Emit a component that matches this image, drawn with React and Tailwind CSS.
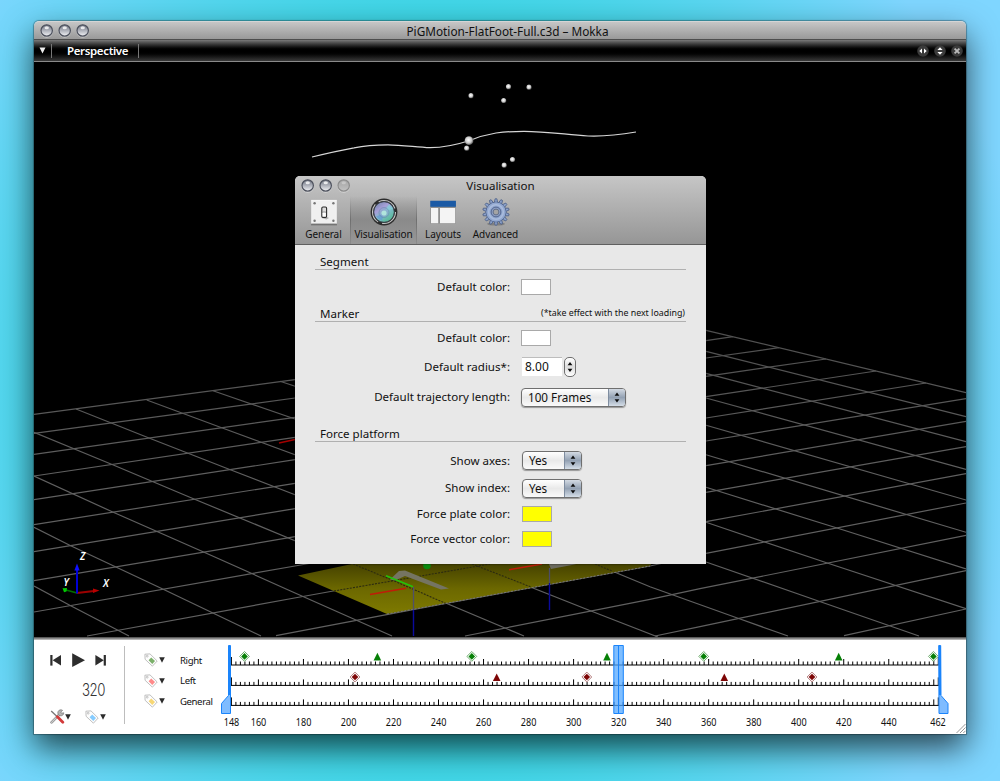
import React from "react";

const FONT = "font-['Noto_Sans','Open_Sans',sans-serif]";

/* ---------- window buttons ---------- */
function Bead({ dim, id }) {
  return (
    <svg className="h-[14px] w-[14px] shrink-0" viewBox="0 0 14 14">
      <defs>
        <linearGradient id={id} x1="0" y1="0" x2="0" y2="1">
          <stop offset="0" stopColor={dim ? "#a9a9a9" : "#6d7280"} />
          <stop offset="0.5" stopColor={dim ? "#b2b2b2" : "#aeb1ba"} />
          <stop offset="1" stopColor={dim ? "#c4c4c4" : "#f4f5f8"} />
        </linearGradient>
      </defs>
      <circle cx="6.7" cy="7.6" r="6.2" fill="#fff" opacity="0.4" />
      <circle cx="6.7" cy="6.5" r="5.7" fill={`url(#${id})`} stroke={dim ? "#8b8b8b" : "#4c505c"} strokeWidth="1.2" />
      <ellipse cx="6.7" cy="3.8" rx="2.2" ry="1.5" fill="#fff" opacity={dim ? 0.3 : 0.8} />
    </svg>
  );
}

/* ---------- 3D scene ---------- */
const GRID = [
  [34, 414.3, 295, 379.7, 692, 327],
  [34, 433.3, 295, 398, 706, 340.7, 733, 336.7],
  [34, 454.3, 295, 417.3, 706, 358, 779, 347.7],
  [34, 476, 295, 437.3, 706, 376.3, 826, 359],
  [34, 499.7, 295, 459.7, 706, 396.7, 876, 371],
  [34, 524.7, 295, 483.3, 706, 418, 926, 383],
  [34, 551.7, 295, 508.7, 706, 441, 966, 398.7],
  [34, 580.7, 295, 536.7, 706, 465.7, 966, 421.3],
  [34, 612, 295, 566, 706, 492.3, 966, 446.7],
  [87, 636, 300, 597, 350, 588, 490, 564, 706, 521.7, 966, 473.7],
  [276, 635.7, 446, 603.3, 650, 566, 706, 553.3, 966, 503],
  [465, 636, 650, 599.3, 700, 588.7, 966, 535.3],
  [655, 636, 700, 626.7, 966, 570.7],
  [844, 635.7, 966, 609],
  [34, 586, 70.7, 605.7, 129, 636],
  [34, 527.3, 70.7, 545.7, 162.7, 589, 261, 636],
  [34, 476, 112.7, 512, 203, 551.7, 290, 590.7, 392, 636],
  [34, 432.3, 112.7, 464.7, 194, 499, 295, 540.7, 353, 564, 524, 636],
  [76, 409, 149, 438, 231, 470, 295, 494.7, 472, 564, 591, 611, 658, 637],
  [146.7, 400, 221.7, 427.7, 295, 454.7, 595, 564, 650, 586.7, 738, 618.3, 788, 636],
  [213, 390.7, 290, 417.3, 706, 562, 819, 601.3, 919, 636],
  [280, 381.3, 706, 522.3, 828, 563.3, 966, 608.7],
  [350, 373, 706, 487.3, 837, 528, 966, 569],
  [420, 364, 706, 454.7, 966, 532.3],
  [480, 356, 706, 425.3, 966, 500],
  [540, 348, 706, 398, 966, 469.3],
  [590, 341, 706, 373.3, 966, 441.7],
  [640, 334, 706, 351.3, 966, 416.7],
  [692, 327, 706, 330.3, 966, 392.7],
];

const MARKERS = [
  [471, 95.7], [508.5, 86.7], [529, 87.2], [503.7, 100.5], [466.7, 148.2], [504.2, 165.2], [512.5, 159.5],
];

function toPoints(a) {
  const out = [];
  for (let i = 0; i < a.length; i += 2) out.push(`${a[i]},${a[i + 1]}`);
  return out.join(" ");
}

function Scene() {
  return (
    <svg className="block h-[575px] w-[932px] bg-black" viewBox="34 62 932 575">
      <defs>
        <radialGradient id="ball" cx="0.45" cy="0.42" r="0.58">
          <stop offset="0" stopColor="#fff" />
          <stop offset="0.6" stopColor="#c9c9c9" />
          <stop offset="1" stopColor="#4a4a4a" />
        </radialGradient>
        <linearGradient id="plate" x1="0" y1="564" x2="0" y2="614" gradientUnits="userSpaceOnUse">
          <stop offset="0" stopColor="#454200" />
          <stop offset="0.5" stopColor="#6c6800" />
          <stop offset="1" stopColor="#7e7a00" />
        </linearGradient>
        <linearGradient id="fade" x1="0" y1="330" x2="0" y2="480" gradientUnits="userSpaceOnUse">
          <stop offset="0" stopColor="#4f4f4f" />
          <stop offset="1" stopColor="#606060" />
        </linearGradient>
      </defs>
      <g fill="none" stroke="url(#fade)" strokeWidth="1.2">
        {GRID.map((g, i) => (
          <polyline key={i} points={toPoints(g)} />
        ))}
      </g>
      <polygon points="298,575.6 352,564 340,550 660,550 650,566 387,614" fill="url(#plate)" />
      <g fill="none" stroke="#2c2b10" strokeWidth="1.1" strokeDasharray="2 1.2">
        <path d="M334 591 L490 564 M353 564 L392 580 L446 603.5 M472 564 L531 587 M595 564 L612 571" />
      </g>
      <path d="M387 614 L446 603.3 L650 566" fill="none" stroke="#777" strokeWidth="1" strokeDasharray="2 1.5" />
      <path d="M390 579.5 L399 571 L405 570.5 L449 588.5 L441 589.5 L405 576 L395 580.5 Z" fill="#757462" />
      <path d="M548 562 H585 L572 565 L551 569 Z" fill="#6b6a5e" />
      <path d="M370 594.5 L406 588.2 M509 569.8 L542 564" stroke="#c01c08" strokeWidth="1.5" />
      <path d="M386 575.7 L413 586.8" stroke="#22c40a" strokeWidth="1.6" />
      <path d="M413.5 587 V610" stroke="#50506a" strokeWidth="1.3" />
      <path d="M413.5 610 V636 M549.5 583 V610" stroke="#0a0a9c" strokeWidth="1.4" />
      <path d="M549.5 568 V583" stroke="#4c4c68" strokeWidth="1.3" />
      <circle cx="427" cy="565.5" r="3.8" fill="#0a8a0e" />
      <path d="M279 443 L295 439.5" stroke="#a30000" strokeWidth="1.5" />

      <path
        d="M312 157 C330 152.5 342 150 354 147.8 C364 145.7 375 144.8 388 144.8 C402 145 416 147 430 147.7 C444 147.6 457 144.7 469 140.8 C478 137 486 134.6 496 133 C506 131.7 514 131.3 524 131.3 C545 131.4 565 134.4 588 136 C604 136.6 620 134.8 636 132"
        fill="none" stroke="#d6d6d6" strokeWidth="1.2"
      />
      {MARKERS.map(([x, y], i) => (
        <circle key={i} cx={x} cy={y} r="2.6" fill="url(#ball)" />
      ))}
      <circle cx="469" cy="140.7" r="4.4" fill="url(#ball)" />

      <path d="M77 593 L94 591" stroke="#9c0000" strokeWidth="1.8" />
      <path d="M93 588.6 L99.5 590.6 L93 593 Z" fill="#b80000" />
      <path d="M77 593 L66 590" stroke="#007000" strokeWidth="1.8" />
      <path d="M62.5 588.3 L67 588 L66.5 591.5 L64 592.3 Z" fill="#00c800" />
      <path d="M77 593.5 V568" stroke="#0000d4" strokeWidth="2" />
      <path d="M74.4 570.5 L77 563.5 L79.6 570.5 Z" fill="#1010ff" />
      <g fill="#fff" fontFamily="Noto Sans, sans-serif" fontSize="10" fontWeight="600" fontStyle="italic">
        <text x="80" y="560">Z</text>
        <text x="63.5" y="586">Y</text>
        <text x="103" y="587">X</text>
      </g>
    </svg>
  );
}

/* ---------- toolbar icons ---------- */
function SwitchIcon() {
  return (
    <svg className="h-7 w-7" viewBox="0 0 28 28">
      <rect x="1" y="3.5" width="26" height="24" fill="#000" opacity="0.22" />
      <rect x="1.7" y="2.3" width="24.6" height="23.3" fill="#f0f0f0" stroke="#fff" strokeWidth="0.8" />
      <rect x="1.3" y="25.6" width="25.4" height="1" fill="#6c6c6c" />
      {[[4.6, 5.2], [23.4, 5.2], [4.6, 22.8], [23.4, 22.8]].map(([x, y], i) => (
        <circle key={i} cx={x} cy={y} r="1.2" fill="#777" />
      ))}
      <path d="M14 17 L19 20 L16.5 21.5 L11.5 20 Z" fill="#b5b5b5" />
      <rect x="11.8" y="9" width="4.8" height="10.4" rx="1.2" fill="#dcdcdc" stroke="#2a2a2a" strokeWidth="1.1" />
      <path d="M12.6 14.2 H15.8" stroke="#555" strokeWidth="0.8" />
      <rect x="12.7" y="14.6" width="3" height="4" rx="0.6" fill="#fff" />
    </svg>
  );
}

function LensIcon() {
  return (
    <svg className="h-7 w-7" viewBox="0 0 28 28">
      <defs>
        <linearGradient id="lens" x1="0.1" y1="0" x2="0.8" y2="1">
          <stop offset="0" stopColor="#6f83a8" />
          <stop offset="0.35" stopColor="#a79fd8" />
          <stop offset="0.6" stopColor="#7cbcc8" />
          <stop offset="1" stopColor="#4fb98a" />
        </linearGradient>
      </defs>
      <circle cx="14" cy="14" r="13.4" fill="#2c2c2c" />
      <circle cx="14" cy="14" r="11.5" fill="none" stroke="#c6c6c6" strokeWidth="1.1" strokeDasharray="20 4.1" />
      <circle cx="14" cy="14" r="10.3" fill="url(#lens)" stroke="#39414c" strokeWidth="0.9" />
      <path d="M6.4 18.5 A9 9 0 0 0 12 22.6 L14 15 Z" fill="#5f93d8" opacity="0.6" />
      <path d="M14 13.5 L19 6.4 A9 9 0 0 1 22.6 11 Z" fill="#86dfe0" opacity="0.5" />
      <circle cx="14" cy="14.5" r="5" fill="#8fa8cf" opacity="0.55" stroke="#5e7fa4" strokeWidth="0.8" />
      <circle cx="14" cy="15" r="2.6" fill="#baf3e0" opacity="0.8" />
    </svg>
  );
}

function LayoutIcon() {
  return (
    <svg className="h-7 w-7" viewBox="0 0 28 28">
      <rect x="1.3" y="2.8" width="25.6" height="22.8" fill="#8f8f8f" />
      <rect x="1.3" y="2.8" width="25.6" height="6" fill="#1b5aa5" />
      <rect x="2" y="10" width="7.2" height="15.2" fill="#f4f4f4" />
      <rect x="11" y="10" width="15.2" height="15.2" fill="#f4f4f4" />
    </svg>
  );
}

function GearIcon() {
  const teeth = Array.from({ length: 14 }, (_, i) => (i * 360) / 14);
  return (
    <svg className="h-7 w-7" viewBox="0 0 28 28">
      <ellipse cx="14" cy="26" rx="9" ry="1.6" fill="#555" opacity="0.45" />
      <g fill="#8ca2cb" stroke="#4c5f86" strokeWidth="0.8">
        {teeth.map((a) => (
          <path key={a} d="M12.2 5 L13.1 0.8 H14.9 L15.8 5 Z" transform={`rotate(${a} 14 14)`} />
        ))}
        <circle cx="14" cy="14" r="10" />
      </g>
      <circle cx="14" cy="14" r="9.6" fill="#92a8d0" />
      <circle cx="14" cy="14" r="7.3" fill="none" stroke="#a9bbdc" strokeWidth="1.6" />
      <circle cx="14" cy="14" r="4.9" fill="#8d9fc4" stroke="#52658e" strokeWidth="1" />
      <circle cx="14" cy="14" r="2.9" fill="#a4a4a4" stroke="#5c6a86" strokeWidth="0.9" />
    </svg>
  );
}

/* ---------- preference widgets ---------- */
function Arrows({ className }) {
  return (
    <svg className={className} viewBox="0 0 6 11">
      <path d="M3 0.4 L5.4 3.8 H0.6 Z M3 10.6 L5.4 7.2 H0.6 Z" fill="#0c0c0c" />
    </svg>
  );
}

function Combo({ children, className }) {
  return (
    <div className={`flex h-[19px] overflow-hidden rounded-[4px] border border-[#6f6f6f] bg-linear-to-b from-white via-[#e9e9e9] to-[#fafafa] shadow-[0_1px_1px_rgba(0,0,0,0.35)] ${className}`}>
      <span className="flex-1 pl-[6px] text-[11.7px] leading-[17px]">{children}</span>
      <span className="flex w-[17px] items-center justify-center border-l border-[#7f8da0] bg-linear-to-b from-[#d3dae3] via-[#93a1b3] to-[#d5dee8]">
        <Arrows className="h-[11px] w-[6px]" />
      </span>
    </div>
  );
}

function Swatch({ className }) {
  return <div className={`h-4 w-[30px] border border-[#a9a9a9] ${className}`} />;
}

function Row({ label, className, children }) {
  return (
    <div className={`flex items-center ${className}`}>
      <span className="w-[195px] shrink-0 text-right whitespace-nowrap">{label}</span>
      <div className="ml-[11px] flex items-center">{children}</div>
    </div>
  );
}

function Section({ title, note, className }) {
  return (
    <div className={`flex items-end justify-between border-b border-[#b0b0b0] pl-[5px] ${className}`}>
      <span className="leading-[15px]">{title}</span>
      {note && <span className="pr-px text-[8.85px] leading-[15px]">{note}</span>}
    </div>
  );
}

function Tool({ icon, label, className }) {
  return (
    <div className={`flex flex-col items-center pt-[2px] ${className}`}>
      {icon}
      <span className="mt-[2px] text-[10px] leading-[13px] tracking-[-0.08px] whitespace-nowrap">{label}</span>
    </div>
  );
}

function Preferences() {
  return (
    <div className="absolute top-[155px] left-[261px] h-[388px] w-[411px] overflow-hidden rounded-t-[5px] bg-[#e8e8e8] text-[11.55px] text-[#111] shadow-[0_0_2px_rgba(0,0,0,0.8)]">
      <div className="h-[69px] border-b border-[#5f5f5f] bg-linear-to-b from-[#c6c6c6] to-[#969696]">
        <div className="grid h-[20px] grid-cols-[1fr_auto_1fr] items-center">
          <div className="flex gap-1 pl-[6px]">
            <Bead id="p1" />
            <Bead id="p2" />
            <Bead id="p3" dim />
          </div>
          <span className="leading-[20px]">Visualisation</span>
        </div>
        <div className="flex h-[48px]">
          <Tool className="w-[55px] pl-[2px]" icon={<SwitchIcon />} label="General" />
          <div className="w-px bg-linear-to-b from-transparent via-[#6f6f6f] to-[#8c8c8c]" />
          <Tool
            className="w-[65px] bg-linear-to-b from-transparent via-[#8a8a8a] to-[#979797]"
            icon={<LensIcon />}
            label="Visualisation"
          />
          <div className="w-px bg-linear-to-b from-transparent via-[#6f6f6f] to-[#8c8c8c]" />
          <Tool className="w-[52px]" icon={<LayoutIcon />} label="Layouts" />
          <Tool className="w-[53px]" icon={<GearIcon />} label="Advanced" />
        </div>
      </div>
      <div className="px-5">
        <Section title="Segment" className="h-[25px]" />
        <Row label="Default color:" className="h-[34px]"><Swatch className="bg-white" /></Row>
        <Section title="Marker" note="(*take effect with the next loading)" className="h-[18px]" />
        <Row label="Default color:" className="h-[32px]"><Swatch className="bg-white" /></Row>
        <Row label="Default radius*:" className="h-[25px]">
          <div className="ml-px h-[19px] w-[40px] border-t border-[#bdbdbd] bg-white pl-[3px] text-[12px] leading-[18px]">8.00</div>
          <div className="ml-[2px] flex h-[20px] w-[12px] items-center justify-center rounded-[5px] border border-[#6f6f6f] bg-linear-to-b from-white via-[#ddd] to-white">
            <Arrows className="h-[12px] w-[6px]" />
          </div>
        </Row>
        <Row label="Default trajectory length:" className="h-[36px]"><Combo className="w-[105px]">100 Frames</Combo></Row>
        <Section title="Force platform" className="h-[27px]" />
        <div className="pt-[5px]">
          <Row label="Show axes:" className="h-[27px]"><Combo className="ml-px w-[60px]">Yes</Combo></Row>
          <Row label="Show index:" className="h-[28px]"><Combo className="ml-px w-[60px]">Yes</Combo></Row>
          <Row label="Force plate color:" className="h-[24px]"><Swatch className="ml-px bg-[#ffff00]" /></Row>
          <Row label="Force vector color:" className="h-[26px]"><Swatch className="ml-px bg-[#ffff00]" /></Row>
        </div>
      </div>
    </div>
  );
}

/* ---------- transport and timeline ---------- */
function Caret() {
  return (
    <svg className="h-[6px] w-[6px]" viewBox="0 0 6 6">
      <path d="M0.2 0.3 H5.8 L3 5.8 Z" fill="#2b2b2b" />
    </svg>
  );
}

function Tag({ fill }) {
  return (
    <svg className="h-[14px] w-[14px]" viewBox="0 0 14 14">
      <path d="M0.9 1.2 L6 0.9 L13.2 8 L8.4 13.2 L1.1 6.3 Z" fill="#fdfdfd" stroke="#b9b9b9" strokeWidth="0.9" strokeLinejoin="round" />
      <circle cx="3.2" cy="3.2" r="0.9" fill="#fff" stroke="#aaa" strokeWidth="0.7" />
      <path d="M7.2 4.4 L11 8.1 L8.3 10.9 L4.6 7.2 Z" fill={fill} />
    </svg>
  );
}

function ToolsIcon() {
  return (
    <svg className="h-[15px] w-[15px]" viewBox="0 0 15 15">
      <path d="M1.6 13.4 L9.5 5.4" stroke="#8d8d8d" strokeWidth="2.6" strokeLinecap="round" />
      <path d="M1.6 13.4 L9.5 5.4" stroke="#cfcfcf" strokeWidth="1.2" strokeLinecap="round" />
      <path d="M12.6 1.4 A3 3 0 1 0 13.8 3.8 L11.4 4.2 L10.8 3 Z" fill="#b5b5b5" stroke="#777" strokeWidth="0.7" />
      <path d="M1.2 2 L7 7.4" stroke="#777" strokeWidth="1.3" />
      <path d="M7.4 7.8 L12.8 13.2" stroke="#d23a3a" strokeWidth="2.8" strokeLinecap="round" />
    </svg>
  );
}

const frameX = (f) => 231.4 + (f - 148) * 2.2512;
const TICKS = Array.from({ length: 158 }, (_, i) => 148 + i * 2);
const LABELS = [148, 160, 180, 200, 220, 240, 260, 280, 300, 320, 340, 360, 380, 400, 420, 440, 462];

function tickHeight(f) {
  if (f === 148 || f === 462) return 8;
  return f % 20 === 0 ? 6 : 3.5;
}

function Diamond({ x, y, color, light }) {
  return (
    <g>
      <path d={`M${x} ${y - 4.9} L${x + 4.9} ${y} L${x} ${y + 4.9} L${x - 4.9} ${y} Z`} fill="#fff" stroke={light} strokeWidth="1" />
      <path d={`M${x} ${y - 3.3} L${x + 3.3} ${y} L${x} ${y + 3.3} L${x - 3.3} ${y} Z`} fill={color} />
    </g>
  );
}

function Triangle({ x, y, color }) {
  return <path d={`M${x} ${y - 4} L${x + 3.8} ${y + 3.6} H${x - 3.8} Z`} fill={color} />;
}

function Timeline() {
  return (
    <svg className="block h-[94px] w-[746px]" viewBox="220 640 746 94">
      {[665, 685.4, 705.4].map((y) => (
        <g key={y} stroke="#000" strokeWidth="1">
          <path d={`M231 ${y} H939`} />
          {TICKS.map((f) => (
            <path key={f} d={`M${frameX(f)} ${y} V${y - tickHeight(f)}`} />
          ))}
        </g>
      ))}
      {[244.5, 471.8, 703.7, 933.4].map((x) => (
        <Diamond key={x} x={x} y={656.4} color="#068006" light="#6fae6f" />
      ))}
      {[377.4, 607, 838.7].map((x) => (
        <Triangle key={x} x={x} y={656.8} color="#068006" />
      ))}
      {[355, 586.8, 812].map((x) => (
        <Diamond key={x} x={x} y={677} color="#7d0505" light="#b47c7c" />
      ))}
      {[496.7, 724.3].map((x) => (
        <Triangle key={x} x={x} y={677.4} color="#7d0505" />
      ))}
      <g stroke="#1a84fb" strokeWidth="1">
        <path d="M228.5 645.5 H230.5 V713.5 H221.5 V703.5 L228.5 695.5 Z" fill="#7fbcff" />
        <path d="M229.5 646 V695" strokeWidth="2" />
        <path d="M938.7 645.5 H940.7 L941 695.5 L948 703.5 V713.5 H939 Z" fill="#7fbcff" />
        <path d="M940 646 V695" strokeWidth="2" />
        <path d="M613.8 645.5 H623.3 V713.5 H613.8 Z" fill="#4ea5ff" fillOpacity="0.72" />
        <path d="M618.5 646 V713" />
      </g>
      <g fontFamily="Noto Sans, Open Sans, sans-serif" fontSize="10" fill="#111" textAnchor="middle">
        {LABELS.map((f) => (
          <text key={f} x={f === 462 ? 938 : frameX(f) + 0.1} y="725.9" textLength="15.6" lengthAdjust="spacingAndGlyphs">{f}</text>
        ))}
      </g>
      <path d="M956.5 733 L965.5 724 M960 733 L965.5 727.5 M963.3 733 L965.5 730.8" stroke="#8c8c8c" strokeWidth="0.9" />
    </svg>
  );
}

function Transport() {
  return (
    <div className="flex h-[78px] w-[91px] flex-col border-r border-[#bdbdbd] pl-4">
      <svg className="mt-[6px] h-[16px] w-[58px]" viewBox="0 0 58 16">
        <g fill="#2d2d2d">
          <rect x="0.3" y="3" width="2.2" height="10.6" />
          <path d="M11 3 V13.6 L2.6 8.3 Z" />
          <path d="M22.2 1.2 V15 L35 8.2 Z" />
          <rect x="53.7" y="3" width="2.2" height="10.6" />
          <path d="M45.4 3 V13.6 L53.8 8.3 Z" />
        </g>
      </svg>
      <span className="mt-[12px] ml-[32px] h-[20px] w-[23px] origin-left scale-x-[0.78] font-['Inter',sans-serif] text-[17px] leading-[20px] font-light tracking-[-0.6px] text-[#333]">320</span>
      <div className="mt-[9px] flex items-center">
        <ToolsIcon />
        <Caret />
        <div className="ml-[14px] flex items-center gap-px">
          <Tag fill="#86ccff" />
          <Caret />
        </div>
      </div>
    </div>
  );
}

function Tracks() {
  return (
    <div className="flex flex-col pt-[10px] pl-[19px] text-[9.6px] tracking-[-0.4px] text-[#111]">
      {[["Right", "#7bb06a"], ["Left", "#ff8a8a"], ["General", "#f7d774"]].map(([name, fill]) => (
        <div key={name} className="flex h-[20.4px] items-center">
          <Tag fill={fill} />
          <span className="ml-px flex w-[21px]"><Caret /></span>
          <span className="pt-[2px]">{name}</span>
        </div>
      ))}
    </div>
  );
}

function ViewButton({ children }) {
  return (
    <svg className="h-3 w-3" viewBox="0 0 12 12">
      <circle cx="6" cy="6" r="5.8" fill="#3b3b3b" />
      {children}
    </svg>
  );
}

export default function App() {
  return (
    <div className={`h-[781px] w-[1000px] overflow-hidden bg-[radial-gradient(ellipse_600px_620px_at_44%_50%,#2fd6de_0%,#35d6e2_55%,#7fd6ff_100%)] px-[34px] pt-[21px] ${FONT}`}>
      <div className="relative h-[713px] w-[932px] rounded-t-[5px] shadow-[0_14px_32px_rgba(0,0,0,0.68),0_0_1px_1px_rgba(0,0,0,0.3)]">
        <div className="grid h-[19px] grid-cols-[1fr_auto_1fr] items-center rounded-t-[5px] border-t border-b border-t-[#d5d5d5] border-b-[#4d4d4d] bg-linear-to-b from-[#c6c6c6] to-[#999]">
          <div className="flex gap-1 pl-[6px]">
            <Bead id="w1" />
            <Bead id="w2" />
            <Bead id="w3" />
          </div>
          <span className="pl-[15px] text-[11.8px] leading-[18px] text-[#111]">PiGMotion-FlatFoot-Full.c3d – Mokka</span>
        </div>
        <div className="flex h-[22px] items-center border-b border-[#8a8a8a] bg-linear-to-b from-[#7a7a7a] via-black via-50% to-[#3a3a3a] text-white">
          <div className="flex h-[14px] w-[18px] items-center border-r border-[#777] pl-[5px]">
            <svg className="h-[7px] w-[7px]" viewBox="0 0 7 7"><path d="M0.5 0.4 H6.5 L3.5 6.4 Z" fill="#eee" /></svg>
          </div>
          <div className="flex h-[14px] w-[87px] items-center border-r border-[#777] pl-[15px] text-[11.5px] font-semibold tracking-[-0.36px]">Perspective</div>
          <div className="ml-auto flex gap-[5px] pr-[3px]">
            <ViewButton><path d="M5 3.4 V8.6 L2.3 6 Z M7 3.4 V8.6 L9.7 6 Z" fill="#fff" /></ViewButton>
            <ViewButton><path d="M3.4 5 H8.6 L6 2.3 Z M3.4 7 H8.6 L6 9.7 Z" fill="#fff" /></ViewButton>
            <ViewButton><path d="M3.6 3.6 L8.4 8.4 M8.4 3.6 L3.6 8.4" stroke="#bbb" strokeWidth="1.8" /></ViewButton>
          </div>
        </div>
        <Scene />
        <div className="h-[3px] bg-linear-to-b from-[#444] via-[#888] to-[#ccc]" />
        <div className="flex h-[94px] bg-white">
          <div className="pt-[6px]"><Transport /></div>
          <div className="w-[95px] shrink-0"><Tracks /></div>
          <Timeline />
        </div>
        <Preferences />
      </div>
    </div>
  );
}
